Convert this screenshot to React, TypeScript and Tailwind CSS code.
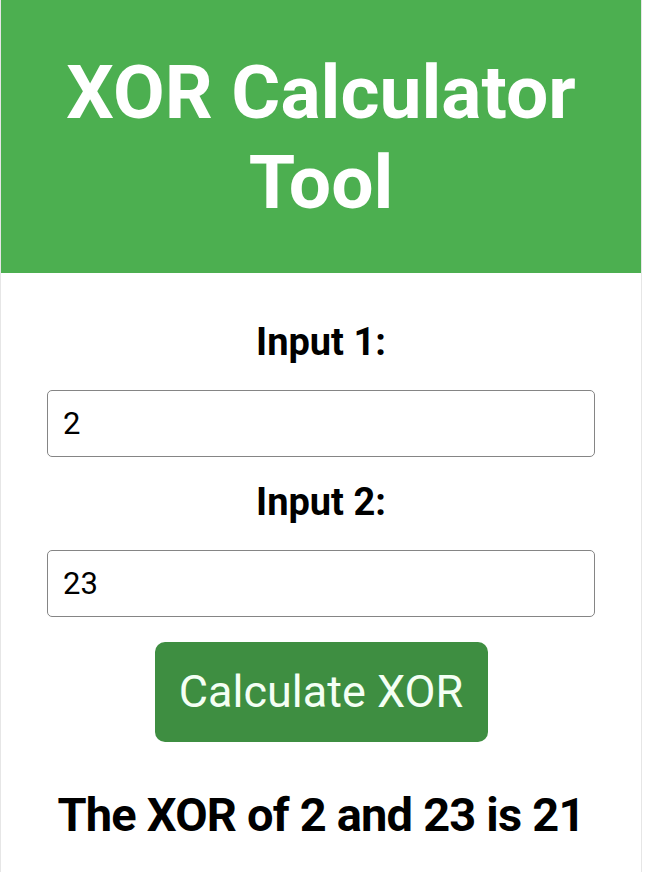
import React, { useState } from 'react';

// XOR calculator page: green title banner, two number inputs, a button and the result line
export default function App() {
  const [a, setA] = useState('2');
  const [b, setB] = useState('23');
  const [result, setResult] = useState<number | null>(2 ^ 23);

  const calculate = () => {
    const x = parseInt(a, 10) || 0;
    const y = parseInt(b, 10) || 0;
    setResult(x ^ y);
  };

  return (
    <div className="w-[642px] min-h-[872px] bg-white border-x border-[#e6e6e6] font-['Roboto',sans-serif] text-black">
      {/* Title banner */}
      <header className="h-[273px] bg-[#4CAF50] flex items-center justify-center">
        <h1 className="text-[75px] leading-[90px] font-bold text-white text-center">
          XOR Calculator
          <br />
          Tool
        </h1>
      </header>

      {/* Form */}
      <main className="flex flex-col items-center pt-[47px]">
        <label htmlFor="in1" className="text-[38px] leading-[45px] font-bold">
          Input 1:
        </label>
        <input
          id="in1"
          type="number"
          value={a}
          onChange={(e) => setA(e.target.value)}
          className="mt-[25px] w-[548px] h-[67px] border-[1.5px] border-[#858585] rounded-[5px] px-[15px] text-[31px] font-['Roboto',sans-serif] outline-none"
        />

        <label htmlFor="in2" className="mt-[23px] text-[38px] leading-[45px] font-bold">
          Input 2:
        </label>
        <input
          id="in2"
          type="number"
          value={b}
          onChange={(e) => setB(e.target.value)}
          className="mt-[25px] w-[548px] h-[67px] border-[1.5px] border-[#858585] rounded-[5px] px-[15px] text-[31px] font-['Roboto',sans-serif] outline-none"
        />

        <button
          onClick={calculate}
          className="mt-[25px] w-[333px] h-[100px] rounded-[10px] bg-[#3E8E41] text-[#f4fff4] text-[45px] font-normal"
        >
          Calculate XOR
        </button>

        {result !== null && (
          <p className="mt-[45px] text-[47px] leading-[56px] font-bold tracking-[-0.8px]">
            The XOR of {a} and {b} is {result}
          </p>
        )}
      </main>
    </div>
  );
}
